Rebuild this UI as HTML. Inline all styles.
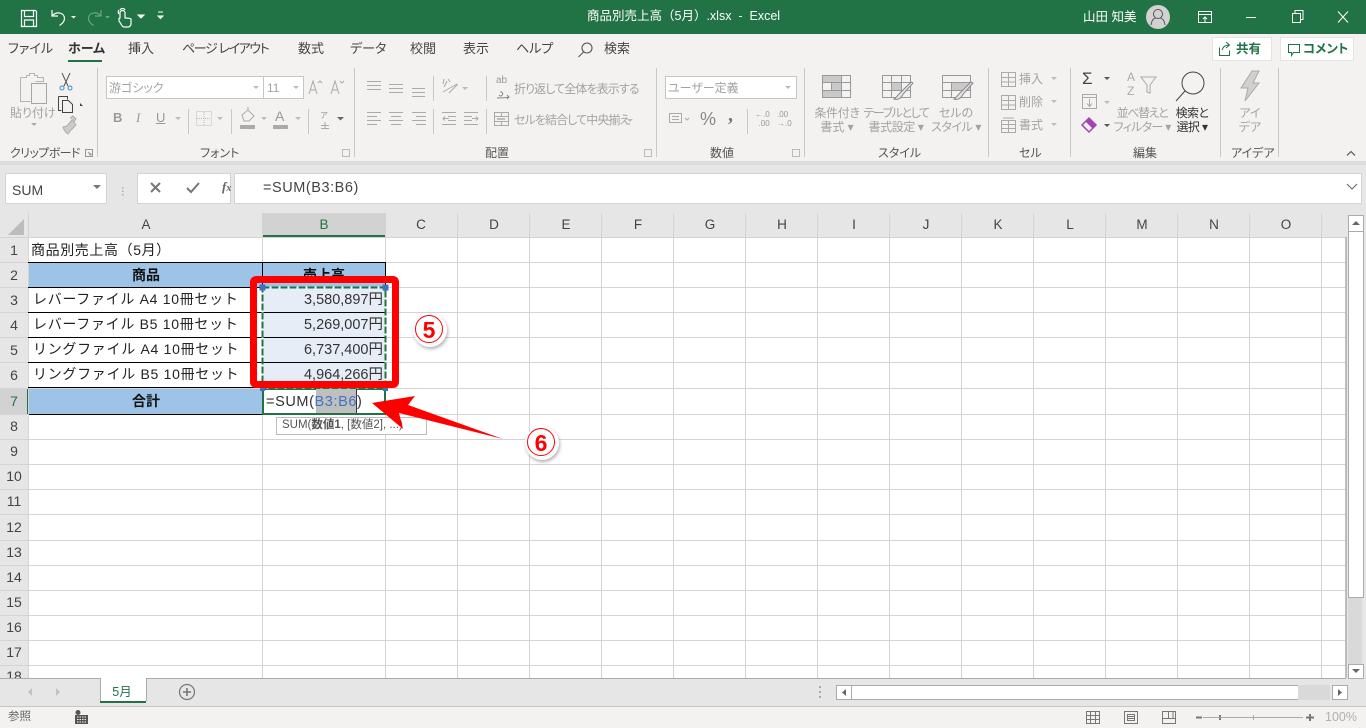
<!DOCTYPE html>
<html lang="ja"><head><meta charset="utf-8"><title>Excel</title>
<style>
html,body{margin:0;padding:0}
body{width:1366px;height:728px;overflow:hidden;position:relative;background:#e6e6e6;font-family:"Liberation Sans","Noto Sans CJK JP",sans-serif;color:#444}
div,svg{position:absolute}
.t{position:absolute;white-space:nowrap;line-height:16px}
.c{transform:translateX(-50%)}
.tab{top:41px;font-size:13px;color:#444;font-feature-settings:"palt"}
.g{color:#a3a3a3;font-size:12px;font-feature-settings:"palt"}
.l{top:145px;font-size:12px;color:#555;font-feature-settings:"palt"}
.h{top:217px;font-size:13.5px;color:#444}
.r{left:14px;font-size:14px;color:#444;transform:translateX(-50%)}
.cell{font-size:14px;color:#222;letter-spacing:.7px;left:33px}
.num{font-size:14.5px;color:#333;right:983px}
.b{font-weight:700;font-size:14px;color:#111}
</style></head><body>
<div style="left:0;top:0;width:1366px;height:34px;background:#217346"></div>
<div style="left:0;top:34px;width:1366px;height:127px;background:#f3f2f1"></div>
<div style="left:0;top:161px;width:1366px;height:4px;background:#dcdcdc"></div>

<svg style="left:0;top:0" width="180" height="34" fill="none" stroke="#fff" stroke-width="1.2">
<path d="M21.500 10.500h14l1 1v15h-15zM24.500 10.500v6h9v-6M24.500 26v-6h9v6"/>
<path d="M52 10v6h6M52.500 15.500c4-4.500 12-3 12 3 0 3-2 5-5 7"/>
<path d="M71 16l2.500 2.500 2.500-2.500z" fill="#fff" stroke="none"/>
<g stroke="#6aa485"><path d="M101 10v6h-6M100.500 15.500c-4-4.500-12-3-12 3 0 3 2 5 5 7"/></g>
<path d="M105 16l2.500 2.500 2.500-2.500z" fill="#6aa485" stroke="none"/>
<path d="M120 18v-5a2.500 2.500 0 0 1 5 0v5c2 0 5 0 6 1v5c0 2-2 3-3 3h-4c-1 0-2-1-3-3l-2-3v-2.500zM120 10c1-2 4-2 5 0M119 14c-1-1-1-3 0-4"/>
<path d="M138 15l3 3 3-3zM158 12h5M158 16l2.500 2.500 2.500-2.500z" fill="#fff" stroke-width="1"/>
</svg>
<div class="t" style="left:587px;top:8px;font-size:12.5px;color:#fff">商品別売上高（5月）.xlsx &nbsp;-&nbsp; Excel</div>
<div class="t" style="left:1083px;top:9px;font-size:12.500px;color:#fff">山田 知美</div>
<svg style="left:1140px;top:0" width="226" height="34" fill="none" stroke="#fff" stroke-width="1">
<circle cx="18" cy="17" r="12" fill="#d2d2d2" stroke="none"/>
<circle cx="18" cy="14" r="4.500" stroke="#555"/><path d="M11 25c1-6 3-6.500 4.500-7M25 25c-1-6-3-6.500-4.500-7" stroke="#555"/>
<path d="M58.500 11.500h13v11h-13zM58.500 14.500h13M65 22v-5M63 19l2-2 2 2"/>
<path d="M106 17.500h10"/>
<path d="M152.500 13.500h8v9h-8zM155 13v-2.500h8v9h-2.500"/>
<path d="M198 11.500l10 11M208 11.500l-10 11"/>
</svg>

<div class="t tab" style="left:8px">ファイル</div>
<div class="t tab" style="left:68px;font-weight:700;color:#333">ホーム</div>
<div style="left:68px;top:60px;width:34px;height:2px;background:#217346"></div>
<div class="t tab" style="left:128px">挿入</div>
<div class="t tab" style="left:182px;letter-spacing:-1.4px">ページ レイアウト</div>
<div class="t tab" style="left:298px">数式</div>
<div class="t tab" style="left:350px">データ</div>
<div class="t tab" style="left:410px">校閲</div>
<div class="t tab" style="left:463px">表示</div>
<div class="t tab" style="left:516px">ヘルプ</div>
<svg style="left:576px;top:40px" width="20" height="20" fill="none" stroke="#555" stroke-width="1.100"><circle cx="11" cy="8" r="5"/><path d="M7.500 12l-5 5"/></svg>
<div class="t tab" style="left:604px">検索</div>

<div style="left:1212px;top:37px;width:58px;height:22px;background:#fff;border:1px solid #e4e4e4"></div>
<div style="left:1280px;top:37px;width:72px;height:22px;background:#fff;border:1px solid #e4e4e4"></div>
<svg style="left:1218px;top:40px" width="140" height="18" fill="none" stroke="#217346" stroke-width="1"><path d="M1.500 7.500v8h10v-5M4 10c1-3 3-5 7-5M8 2l3.500 3-3.500 3"/><path d="M70.500 4.500h11v8h-6l-2 3v-3h-3z"/></svg>
<div class="t" style="left:1236px;top:41px;font-size:12.5px;font-weight:700;color:#217346">共有</div>
<div class="t" style="left:1303px;top:41px;font-size:12.5px;font-weight:700;color:#217346;font-feature-settings:'palt'">コメント</div>

<!-- ribbon separators -->
<svg style="left:0;top:68px" width="1366" height="92" stroke="#c8c8c8" fill="none">
<path d="M97.500 0v89M354.500 0v89M656.500 0v89M804.500 0v89M988.500 0v89M1070.500 0v89M1220.500 0v89M1278.500 0v89"/>
<path d="M433.500 8v25M433.500 41v25M486.500 8v25M486.500 41v25M188.500 41v25M231.500 41v25M308.500 41v25M747.500 41v25"/>
</svg>

<!-- clipboard -->
<svg style="left:18px;top:70px" width="66" height="68" fill="none" stroke="#b5b5b5" stroke-width="1">
<path d="M2.500 7.500h6v-2h3v-2h5v2h3v2h6v4h-8M2.500 7.500v24h10" />
<path d="M13.500 13.500h15v20h-15z" fill="#f3f2f1" stroke="#a5a5a5"/>
<path d="M44 3l6 13M52 3l-6 13" stroke="#555"/><circle cx="44" cy="18" r="2" stroke="#3b88c9"/><circle cx="52" cy="18" r="2" stroke="#3b88c9"/>
<path d="M40.500 26.500h9l-0 0v3M40.500 26.500v14h3M44.500 30.500h6l4 4v8h-10z" stroke="#444" fill="#f3f2f1"/>
<path d="M62 33l3 3-3 0z" fill="#444" stroke="none"/>
<path d="M54 50l-5 6-4 1c1 3 2 5 5 7l3-4 5-5zM52 48l3-2 3 3-2 3" stroke="#aaa" fill="#ccc"/>
</svg>
<div class="t g" style="left:10px;top:105px">貼り付け</div>
<svg style="left:30px;top:122px" width="8" height="6"><path d="M1 1l3 3 3-3z" fill="#aaa"/></svg>

<!-- font -->
<div style="left:106px;top:76px;width:156px;height:21px;background:#fff;border:1px solid #c6c6c6"></div>
<div style="left:263px;top:76px;width:39px;height:21px;background:#fff;border:1px solid #c6c6c6"></div>
<div class="t g" style="left:109px;top:80px">游ゴシック</div>
<div class="t g" style="left:267px;top:80px;font-size:12px">11</div>
<svg style="left:0;top:68px" width="660" height="70" fill="none">
<path d="M253 18l3 3 3-3zM293 18l3 3 3-3z" fill="#bbb"/>
<path d="M309 26l4-13 4 13M310.500 22h5M318 15l2-2 2 2M331 26l4-13 4 13M332.500 22h5M340 13l2 2 2-2" stroke="#aaa"/>
<path d="M175 49l3 3 3-3zM217 49l3 3 3-3zM261 49l3 3 3-3zM295 49l3 3 3-3z" fill="#bbb"/>
<path d="M337 49l3.500 3.500 3.500-3.500z" fill="#666"/>
<path d="M196.500 43.500h15v14h-15zM204 44v13M197 50.500h14" stroke="#bdbdbd" stroke-dasharray="1 1"/>
<path d="M242 47l6-5 6 6-5 5h-5zM248 42v-3" stroke="#aaa"/><rect x="240" y="57" width="15" height="4" fill="#aaa"/>
<rect x="273" y="57" width="15" height="4" fill="#aaa"/>
<path d="M321 60.500h8M321 57.500h8M325 54v7" stroke="#aaa"/>
<path d="M367 13.500h14M367 17.500h14M367 21.500h14M389 16.500h14M389 20.500h14M389 24.500h14M412 20.500h13M412 24.500h13M412 28.500h13" stroke="#aaa"/>
<path d="M367 44.500h14M367 48.500h10M367 52.500h14M367 56.500h10M389 44.500h14M391 48.500h10M389 52.500h14M391 56.500h10M389 56.500M412 44.500h14M416 48.500h10M412 52.500h14M416 56.500h10M442 44.500h14M448 48.500h8M448 52.500h8M442 56.500h14M449 50.500h-6M445 48.500l-2 2 2 2M464 44.500h14M464 48.500h8M464 52.500h8M464 56.500h14M472 50.500h6M476 48.500l2 2-2 2" stroke="#aaa"/>
<path d="M443 24l14-8M449 25l8-8-2 0M447 13l-3 6M444 11l-1 5M448 11l2 3" stroke="#aaa"/>
<path d="M462 19l3 3 3-3zM627 51l3 3 3-3z" fill="#bbb"/>
<path d="M494.500 44.500h14v13h-14zM494.500 48.500h14M494.500 53.500h14M501.500 44v4M501.500 54v4" stroke="#aaa"/><path d="M497 51h8" stroke="#888"/>
<path d="M497 30c4 0 9 0 12-1M507 27l2 2-2 2M500 24a2 2 0 1 1-1 3" stroke="#888"/>
</svg>
<div class="t" style="left:113px;top:110px;font-size:13px;font-weight:700;color:#999">B</div>
<div class="t" style="left:136px;top:110px;font-size:13px;font-style:italic;font-family:'Liberation Serif',serif;color:#999">I</div>
<div class="t" style="left:156px;top:110px;font-size:13px;color:#999;text-decoration:underline">U</div>
<div class="t" style="left:275px;top:108px;font-size:14px;color:#999">A</div>
<div class="t" style="left:320px;top:108px;font-size:8px;color:#999">ア</div>
<div class="t" style="left:496px;top:73px;font-size:10px;color:#999">ab</div>
<div class="t g" style="left:514px;top:81px;letter-spacing:-.9px">折り返して全体を表示する</div>
<div class="t g" style="left:514px;top:112px;letter-spacing:-.9px">セルを結合して中央揃え</div>

<!-- number -->
<div style="left:665px;top:76px;width:130px;height:21px;background:#fff;border:1px solid #c6c6c6"></div>
<div class="t g" style="left:668px;top:80px">ユーザー定義</div>
<svg style="left:660px;top:68px" width="140" height="70" fill="none"><path d="M125 18l3 3 3-3z" fill="#bbb"/><path d="M9.500 45.500h12v9h-12zM12 48.500h7M12 51.500h7M25 50l2 2 2-2" stroke="#aaa"/></svg>
<div class="t" style="left:700px;top:111px;font-size:18px;color:#888">%</div>
<div class="t" style="left:728px;top:107px;font-size:20px;font-weight:700;color:#777;font-family:'Liberation Serif',serif">,</div>
<div class="t" style="left:755px;top:110px;font-size:8px;line-height:9px;color:#999;text-align:right">←.0<br>.00</div>
<div class="t" style="left:777px;top:110px;font-size:8px;line-height:9px;color:#999">.00<br>→.0</div>

<!-- styles -->
<svg style="left:815px;top:70px" width="165" height="32" fill="none" stroke="#999">
<path d="M7.500 5.500h28v22h-28zM7.500 12.500h28M7.500 20.500h28M16.500 5.500v22M26.500 5.500v22"/>
<path d="M7.500 5.500h19v7h-19zM16.500 12.500h10v8h-10zM7.500 20.500h19v7h-19z" fill="#c9c9c9"/>
<path d="M67.500 5.500h28v22h-28zM67.500 12.500h28M67.500 20.500h28M76.500 5.500v22M86.500 5.500v22"/>
<path d="M76.500 12.500h10v8h-10z" fill="#c9c9c9"/>
<path d="M96 12l-9 9-3 3c-2 2-3 4-5 5 3 1 6 0 8-3l2-3 9-10z" fill="#e3e3e3" stroke="#888"/>
<path d="M127.500 5.500h28v22h-28zM127.500 12.500h28M127.500 20.500h28M136.500 12.500v15"/>
<path d="M136.500 12.500h19v8h-19z" fill="#c9c9c9"/>
<path d="M156 12l-9 9-3 3c-2 2-3 4-5 5 3 1 6 0 8-3l2-3 9-10z" fill="#e3e3e3" stroke="#888"/>
</svg>
<div class="t g c" style="left:837px;top:105px;letter-spacing:-.3px">条件付き</div>
<div class="t g c" style="left:837px;top:119px">書式 ▾</div>
<div class="t g c" style="left:896px;top:105px;letter-spacing:-1.4px">テーブルとして</div>
<div class="t g c" style="left:896px;top:119px;letter-spacing:-.4px">書式設定 ▾</div>
<div class="t g c" style="left:956px;top:105px">セルの</div>
<div class="t g c" style="left:956px;top:119px;letter-spacing:-.4px">スタイル ▾</div>

<!-- cells -->
<svg style="left:998px;top:70px" width="22" height="65" fill="none" stroke="#aaa">
<path d="M3.500 2.500h14v14h-14zM3.500 7.500h14M3.500 12h14M10.500 2.500v14"/>
<path d="M3.500 25.500h14v14h-14zM3.500 30.500h14M3.500 35h14M10.500 25.500v14"/>
<path d="M3.500 50.500h14v12h-14zM3.500 54.500h14M3.500 58.500h14M10.500 50.500v12M5 48h11"/>
</svg>
<div class="t g" style="left:1019px;top:71px">挿入</div><div class="t g" style="left:1019px;top:94px">削除</div><div class="t g" style="left:1019px;top:117px">書式</div>
<svg style="left:1048px;top:70px" width="14" height="60"><path d="M3 7l3 3 3-3zM3 30l3 3 3-3zM3 53l3 3 3-3z" fill="#bbb"/></svg>

<!-- editing -->
<div class="t" style="left:1082px;top:71px;font-size:17px;color:#444">Σ</div>
<svg style="left:1080px;top:70px" width="32" height="66" fill="none">
<path d="M24 7l3 3 3-3zM24 54l3 3 3-3z" fill="#555"/><path d="M24 31l3 3 3-3z" fill="#bbb"/>
<path d="M2.500 24.500h14v14h-14zM2.500 27.500h14M9.500 29v7M7 33.500l2.500 3 2.500-3" stroke="#aaa"/>
<path d="M2 55l7-7 7 7-7 7z" stroke="#a346b3" stroke-width="1.500"/><path d="M5.500 51.500l3.500-3.500 7 7-3.500 3.500z" fill="#a346b3"/>
</svg>
<div class="t" style="left:1127px;top:70px;font-size:12px;line-height:14px;color:#aaa">A<br>Z</div>
<svg style="left:1140px;top:75px" width="18" height="24" fill="none" stroke="#aaa"><path d="M1 2h15l-6 8v8l-3-1v-7z"/></svg>
<div class="t g c" style="left:1142px;top:105px;letter-spacing:-1.400px">並べ替えと</div>
<div class="t g c" style="left:1142px;top:119px;letter-spacing:-.7px">フィルター ▾</div>
<svg style="left:1175px;top:70px" width="34" height="34" fill="none" stroke="#444"><circle cx="18" cy="13" r="11"/><path d="M10 21l-9 10"/></svg>
<div class="t c" style="left:1192px;top:105px;font-size:12px;color:#333;font-feature-settings:'palt';letter-spacing:-.6px">検索と</div>
<div class="t c" style="left:1192px;top:119px;font-size:12px;color:#333;font-feature-settings:'palt';letter-spacing:-.6px">選択 ▾</div>

<svg style="left:1238px;top:70px" width="24" height="32"><path d="M14 1h7l-6 12h6L7 31l3-13H3z" fill="#d0d0d0" stroke="#aaa"/></svg>
<div class="t g c" style="left:1250px;top:105px">アイ</div><div class="t g c" style="left:1250px;top:119px">デア</div>

<div class="t l" style="left:10px;letter-spacing:-.6px">クリップボード</div>
<div class="t l" style="left:200px">フォント</div>
<div class="t l" style="left:485px">配置</div>
<div class="t l" style="left:710px">数値</div>
<div class="t l" style="left:878px">スタイル</div>
<div class="t l" style="left:1019px">セル</div>
<div class="t l" style="left:1133px">編集</div>
<div class="t l" style="left:1231px">アイデア</div>
<svg style="left:0;top:146px" width="1366" height="14" fill="none" stroke="#999">
<path d="M85.500 3.500h7v7h-7zM88 6l3 3M91 7v2h-2" /><path d="M342.500 3.500h7v7h-7zM644.500 3.500h7v7h-7zM792.500 3.500h7v7h-7z" stroke="#bbb"/>
<path d="M1347 9.500l4-4 4 4" stroke="#666" stroke-width="1.300"/>
</svg>

<!-- formula bar -->
<div style="left:5px;top:173px;width:100px;height:29px;background:#fff;border:1px solid #d4d4d4"></div>
<div class="t" style="left:12px;top:182px;font-size:14px;color:#444">SUM</div>
<svg style="left:90px;top:180px" width="50" height="20"><path d="M3 5l4 4 4-4z" fill="#777"/><path d="M32 7h1.500v1.500H32zM32 10.500h1.500V12H32zM32 14h1.500v1.500H32z" fill="#aaa"/></svg>
<div style="left:137px;top:173px;width:92px;height:29px;background:#fff;border:1px solid #d4d4d4"></div>
<div style="left:234px;top:173px;width:1126px;height:29px;background:#fff;border:1px solid #d4d4d4"></div>
<svg style="left:145px;top:178px" width="95" height="20" fill="none" stroke="#777" stroke-width="2"><path d="M6 5l9 9M15 5l-9 9"/><path d="M42 10l4 4 8-9"/></svg>
<div class="t" style="left:222px;top:179px;font-size:13px;font-style:italic;font-weight:700;font-family:'Liberation Serif',serif;color:#666">f<span style="font-size:10px">x</span></div>
<div class="t" style="left:263px;top:180px;font-size:14.5px;color:#444;letter-spacing:.55px">=SUM(B3:B6)</div>
<svg style="left:1345px;top:182px" width="14" height="10" fill="none" stroke="#666"><path d="M2 2l5 5 5-5"/></svg>

<!-- sheet -->
<div style="left:28px;top:237px;width:1318px;height:441px;background:#fff"></div>
<div style="left:0;top:213px;width:28px;height:465px;background:#e6e6e6"></div>
<svg style="left:0;top:213px" width="28" height="24"><path d="M24 6v16H8z" fill="#bcbcbc"/></svg>
<div style="left:262px;top:213px;width:123px;height:22px;background:#d2d2d2"></div>
<div style="left:262px;top:235px;width:123px;height:2px;background:#217346"></div>
<div style="left:0;top:388px;width:27px;height:26px;background:#d2d2d2"></div>
<div style="left:27px;top:388px;width:2px;height:26px;background:#217346"></div>
<svg style="left:0;top:213px" width="1347" height="465" fill="none" stroke="#d4d4d4">
<path d="M28.500 0v465M262.500 0v465M385.500 0v465M457.500 0v465M529.500 0v465M601.500 0v465M673.500 0v465M745.500 0v465M817.500 0v465M889.500 0v465M961.500 0v465M1033.500 0v465M1105.500 0v465M1177.500 0v465M1249.500 0v465M1321.500 0v465"/>
<path d="M0 24.500h1346M0 49.500h1346M0 74.500h1346M0 99.500h1346M0 124.500h1346M0 149.500h1346M0 175.500h1346M0 201.500h1346M0 226.500h1346M0 251.500h1346M0 276.500h1346M0 301.500h1346M0 327.500h1346M0 352.500h1346M0 377.500h1346M0 402.500h1346M0 427.500h1346M0 452.500h1346"/>
<path d="M1346 24v441" stroke="#ababab" stroke-width="1.500"/>
</svg>
<div class="t h c" style="left:146px">A</div><div class="t h c" style="left:324px;color:#217346">B</div><div class="t h c" style="left:421px">C</div><div class="t h c" style="left:494px">D</div><div class="t h c" style="left:566px">E</div><div class="t h c" style="left:638px">F</div><div class="t h c" style="left:710px">G</div><div class="t h c" style="left:782px">H</div><div class="t h c" style="left:854px">I</div><div class="t h c" style="left:926px">J</div><div class="t h c" style="left:998px">K</div><div class="t h c" style="left:1070px">L</div><div class="t h c" style="left:1142px">M</div><div class="t h c" style="left:1214px">N</div><div class="t h c" style="left:1286px">O</div>
<div class="t r" style="top:242px">1</div><div class="t r" style="top:267px">2</div><div class="t r" style="top:292px">3</div><div class="t r" style="top:317px">4</div><div class="t r" style="top:342px">5</div><div class="t r" style="top:367px">6</div><div class="t r" style="top:393px;color:#217346">7</div><div class="t r" style="top:418px">8</div><div class="t r" style="top:443px">9</div><div class="t r" style="top:468px">10</div><div class="t r" style="top:493px">11</div><div class="t r" style="top:519px">12</div><div class="t r" style="top:544px">13</div><div class="t r" style="top:569px">14</div><div class="t r" style="top:594px">15</div><div class="t r" style="top:619px">16</div><div class="t r" style="top:644px">17</div><div style="left:0;top:669px;width:28px;height:9px;overflow:hidden"><div class="t r" style="top:-1px">18</div></div>

<!-- table -->
<div style="left:29px;top:263px;width:356px;height:24px;background:#9dc3e6"></div>
<div style="left:29px;top:389px;width:233px;height:25px;background:#9dc3e6"></div>
<div style="left:263px;top:288px;width:122px;height:100px;background:#e6edf7"></div>
<svg style="left:0;top:230px" width="400" height="190" fill="none" stroke="#000">
<path d="M28 32.500h358M28 57.500h358M28 82.500h358M28 107.500h358M28 132.500h358M28 157.500h358M29 184.500h234M262.500 32v153M385.500 32v126"/>
</svg>
<div class="t" style="left:31px;top:242px;font-size:14px;color:#222;letter-spacing:.6px">商品別売上高（5月）</div>
<div class="t b c" style="left:146px;top:267px">商品</div>
<div class="t b c" style="left:324px;top:267px">売上高</div>
<div class="t cell" style="top:291px">レバーファイル A4 10冊セット</div>
<div class="t cell" style="top:316px">レバーファイル B5 10冊セット</div>
<div class="t cell" style="top:341px">リングファイル A4 10冊セット</div>
<div class="t cell" style="top:366px">リングファイル B5 10冊セット</div>
<div class="t num" style="top:292px">3,580,897円</div>
<div class="t num" style="top:317px">5,269,007円</div>
<div class="t num" style="top:342px">6,737,400円</div>
<div class="t num" style="top:367px">4,964,266円</div>
<div class="t b c" style="left:146px;top:393px">合計</div>

<!-- B7 -->
<div style="left:262px;top:388px;width:124px;height:27px;box-sizing:border-box;border:2px solid #217346;background:#fff"></div>
<div style="left:316px;top:389px;width:41px;height:24px;background:#bfbfbf"></div>
<div style="left:356px;top:389px;width:1px;height:24px;background:#333"></div>
<div class="t" style="left:266px;top:394px;font-size:14.500px;color:#333;letter-spacing:.6px">=SUM(<span style="color:#4472c4">B3:B6</span>)</div>
<div style="left:276px;top:417px;width:149px;height:16px;background:#fff;border:1px solid #bdbdbd"></div>
<div class="t" style="left:282px;top:417px;font-size:11.5px;color:#555">SUM(<b>数値1</b>, [数値2], ...)</div>

<!-- marching ants -->
<svg style="left:255px;top:280px" width="140" height="115" fill="none">
<rect x="7.500" y="7.500" width="123" height="100" stroke="#fff" stroke-width="2"/>
<rect x="7.500" y="7.500" width="123" height="100" stroke="#217346" stroke-width="2" stroke-dasharray="7 2"/>
<path d="M4.500 4.500h6v6h-6zM127.500 4.500h6v6h-6zM5 106h5v5H5zM128 106h5v5h-5z" fill="#3b73c4"/>
</svg>

<!-- callouts -->
<div style="left:250px;top:276px;width:149px;height:112px;box-sizing:border-box;border:7.500px solid #f00;border-radius:6px"></div>
<svg style="left:360px;top:385px" width="160" height="60"><path d="M12 18L55 11 48 20 143 54 39 28 43 44z" fill="#f00"/></svg>
<div style="left:413px;top:313px;width:34px;height:34px;border-radius:50%;background:#fff;box-shadow:1px 2px 3px rgba(0,0,0,.3)"></div>
<div style="left:415px;top:315px;width:28px;height:28px;border-radius:50%;border:1.500px solid #f00;box-sizing:border-box;background:#fff"></div>
<div class="t c" style="left:429px;top:320px;font-size:23px;line-height:20px;font-weight:700;color:#f00">5</div>
<div style="left:525px;top:426px;width:34px;height:34px;border-radius:50%;background:#fff;box-shadow:1px 2px 3px rgba(0,0,0,.3)"></div>
<div style="left:527px;top:428px;width:28px;height:28px;border-radius:50%;border:1.500px solid #f00;box-sizing:border-box;background:#fff"></div>
<div class="t c" style="left:541px;top:433px;font-size:23px;line-height:20px;font-weight:700;color:#f00">6</div>

<!-- v scrollbar -->
<div style="left:1348px;top:215px;width:14px;height:463px;background:#d9d9d9"></div>
<div style="left:1348px;top:215px;width:14px;height:15px;background:#fff;border:1px solid #ababab"></div>
<div style="left:1348px;top:231px;width:14px;height:365px;background:#fff;border:1px solid #ababab"></div>
<div style="left:1348px;top:664px;width:14px;height:13px;background:#fff;border:1px solid #ababab"></div>
<svg style="left:1348px;top:215px" width="16" height="16"><path d="M4 10l4-4 4 4z" fill="#666"/></svg>
<svg style="left:1348px;top:664px" width="16" height="14"><path d="M4 5l4 4 4-4z" fill="#666"/></svg>

<!-- tabs bar -->
<div style="left:0;top:678px;width:1346px;height:1px;background:#ababab"></div>
<svg style="left:20px;top:684px" width="50" height="16"><path d="M12 4v8l-4-4zM36 4v8l4-4z" fill="#c0c0c0"/></svg>
<div style="left:100px;top:678px;width:45px;height:23px;background:#fff;border-left:1px solid #ababab;border-right:1px solid #ababab"></div>
<div style="left:100px;top:701px;width:46px;height:2px;background:#217346"></div>
<div class="t c" style="left:122px;top:684px;font-size:12.500px;color:#217346">5月</div>
<svg style="left:178px;top:683px" width="18" height="18" fill="none" stroke="#777"><circle cx="9" cy="9" r="7.500" stroke-width="1.200"/><path d="M5 9h8M9 5v8" stroke-width="1.600"/></svg>
<svg style="left:818px;top:686px" width="6" height="14"><path d="M1 0h2v2H1zM1 5h2v2H1zM1 10h2v2H1z" fill="#aaa"/></svg>
<div style="left:836px;top:685px;width:14px;height:13px;background:#fff;border:1px solid #ababab"></div>
<div style="left:851px;top:685px;width:446px;height:13px;background:#fff;border:1px solid #ababab"></div>
<div style="left:1298px;top:685px;width:32px;height:15px;background:#d9d9d9"></div>
<div style="left:1332px;top:685px;width:14px;height:13px;background:#fff;border:1px solid #ababab"></div>
<svg style="left:836px;top:685px" width="16" height="15"><path d="M10 4v7L6 7.500z" fill="#666"/></svg>
<svg style="left:1332px;top:685px" width="16" height="15"><path d="M6 4v7l4-3.500z" fill="#666"/></svg>

<!-- status -->
<div style="left:0;top:706px;width:1366px;height:22px;background:#f3f2f1;border-top:1px solid #c6c6c6;box-sizing:border-box"></div>
<div class="t" style="left:8px;top:709px;font-size:11.5px;color:#666">参照</div>
<svg style="left:74px;top:709px" width="16" height="15"><circle cx="4" cy="3.500" r="2.500" fill="#555"/><path d="M1 6h13v9H1z" fill="#555"/><path d="M3 8h9M3 10.500h9M3 13h9" stroke="#f3f2f1" stroke-dasharray="1.500 1"/></svg>
<svg style="left:1080px;top:708px" width="286" height="20" fill="none" stroke="#777">
<path d="M6.500 3.500h13v12h-13zM6.500 7.500h13M6.500 11.500h13M10.500 3.500v12M15.500 3.500v12"/>
<path d="M44.500 3.500h13v12h-13zM47.500 6.500h7v6h-7zM48 8.500h6M48 10.500h6"/>
<path d="M82.500 3.500h13v12h-13zM82.500 10.500h13M88.500 3.500v7M93 3.500v7"/>
<path d="M116 9.500h6M140 7v5" stroke-width="2" stroke="#777"/><path d="M123 9.500h100" stroke="#aaa"/><path d="M173.500 7v5" stroke="#aaa"/>
<path d="M226 9.500h8M230 6v7" stroke-width="2"/>
</svg>
<div class="t" style="left:1325px;top:709px;font-size:12.500px;color:#b0b0b0">100%</div>
</body></html>
